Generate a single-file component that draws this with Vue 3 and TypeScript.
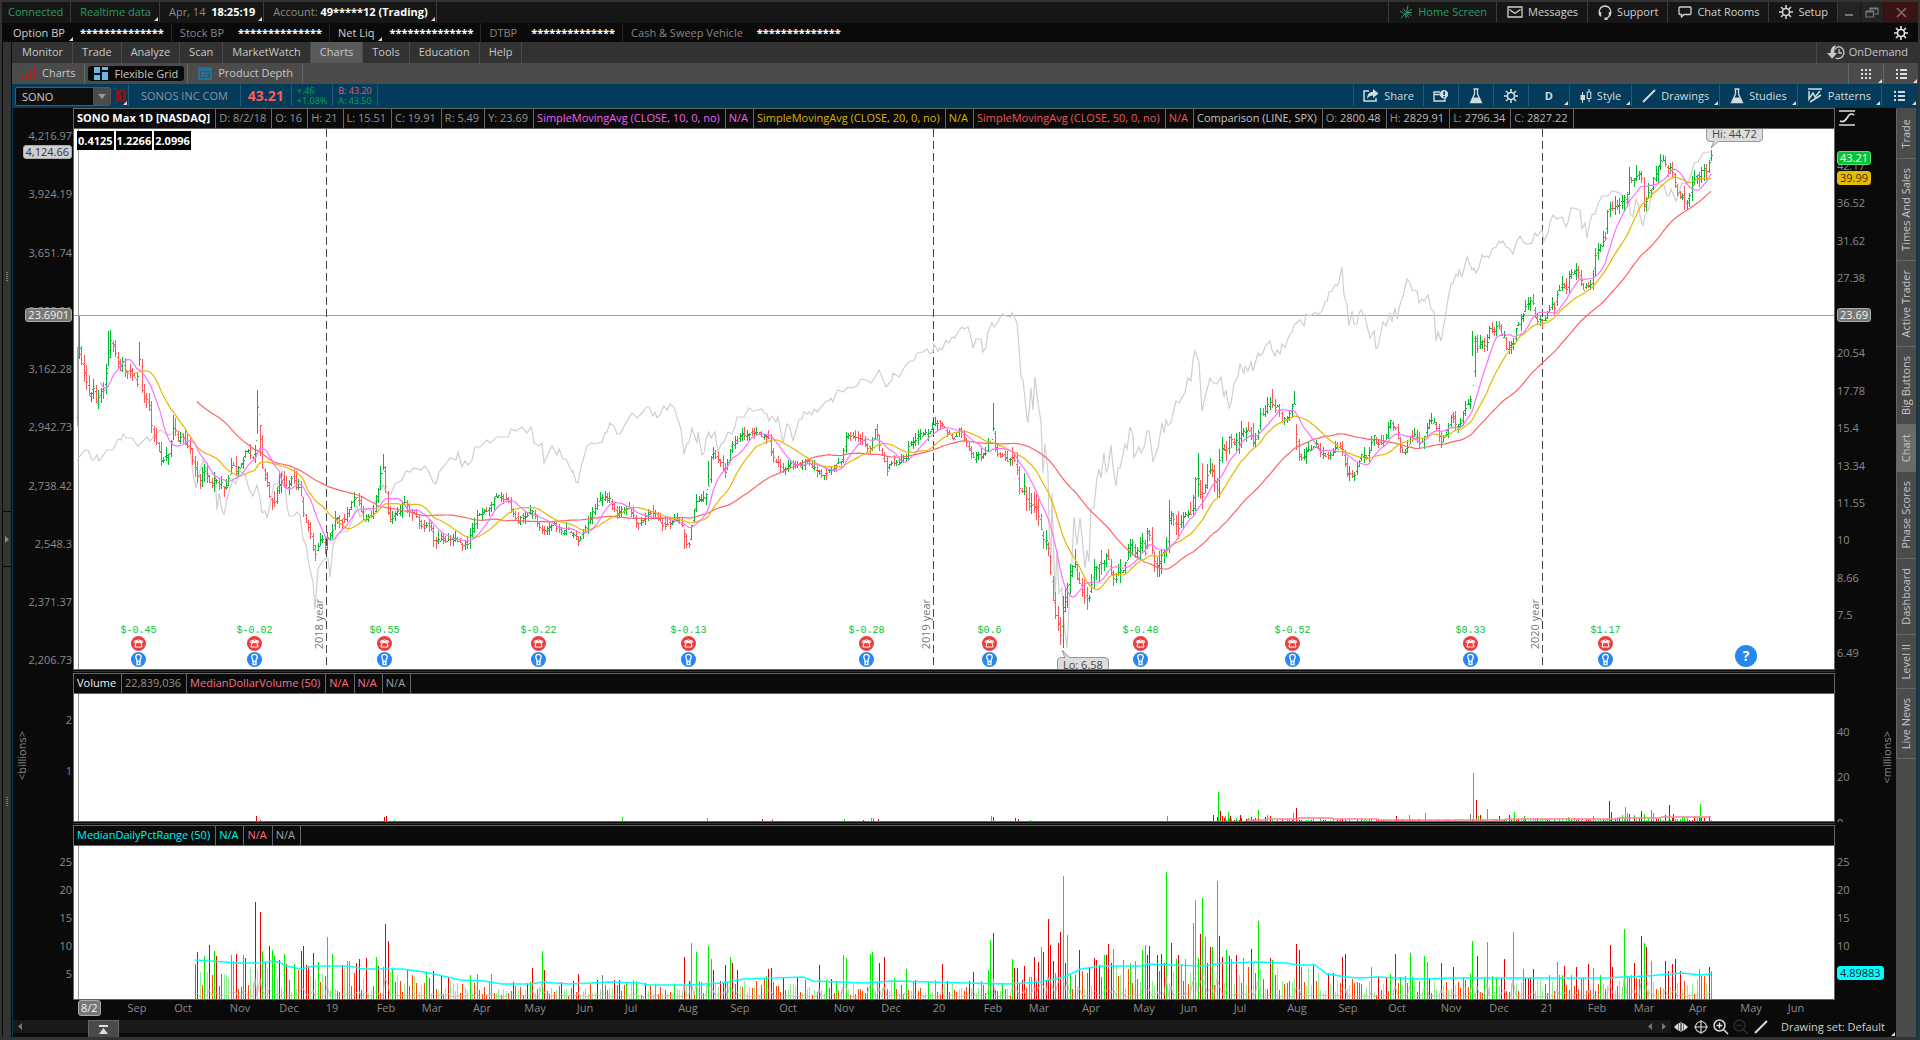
<script setup lang="ts">
import { h } from 'vue'

type Pt = [number, number]
interface IconDef { w: number; h: number; line?: string; fill?: string; sw?: number }

const icons: Record<string, IconDef> = {
  home: { w: 14, h: 14, line: 'M2 13L7.500 7.500L9 .5M7.500 7.500L13 4M7.500 7.500H13M7.500 7.500L12.500 10.500M7 8L9.500 12.500M6.500 8.500L7 13M1 6L5.500 8.500M4 3.500L7 7', sw: 1 },
  mail: { w: 16, h: 12, line: 'M1 1H15V11H1ZM2.500 3.500L8 7.500L13.500 3.500', sw: 1.3 },
  support: { w: 14, h: 15, line: 'M3 11Q.8 9.500 1.200 6.500Q2.200 1.200 7 1Q11.800 1.200 12.800 6.500Q13 10 10.500 12L8.500 13.500', fill: 'M1 7H3.200V11.500H2.500L1 9.500ZM10.800 7H13V9.500L11.500 11.500H10.800ZM6.500 12.500H9.500V15H6.500Z', sw: 1.3 },
  chat: { w: 14, h: 12, line: 'M2 1H12Q13 1 13 2V7.500Q13 8.500 12 8.500H6L3.500 11V8.500H2Q1 8.500 1 7.500V2Q1 1 2 1Z', sw: 1.3 },
  gear: { w: 14, h: 14, line: 'M7 3.500A3.500 3.500 0 1 0 7 10.500A3.500 3.500 0 1 0 7 3.500M7 0V3M7 11V14M0 7H3M11 7H14M2 2L4.300 4.300M9.700 9.700L12 12M2 12L4.300 9.700M9.700 4.300L12 2', sw: 1.6 },
  restore: { w: 14, h: 11, line: 'M1 4H8.500V10H1ZM5 4V1H13V7H8.500M5 2H13M1 5H8.500', sw: 1.2 },
  close: { w: 11, h: 11, line: 'M1 1L10 10M10 1L1 10', sw: 1.6 },
  min: { w: 9, h: 9, fill: 'M0 6H8V8H0Z' },
  ondemand: { w: 18, h: 15, line: 'M11 1.500A6 6 0 1 1 8.500 13M12 4V8H15M8 4.500Q9 2 12 1.500', fill: 'M9 .3Q3.500 1 3.500 8H0L5.200 13.800L10 8H7.500Q7 3 9 .3Z', sw: 1.3 },
  dots: { w: 10, h: 10, fill: 'M0 0h2v2h-2zM4 0h2v2h-2zM8 0h2v2h-2zM0 4h2v2h-2zM4 4h2v2h-2zM8 4h2v2h-2zM0 8h2v2h-2zM4 8h2v2h-2zM8 8h2v2h-2z' },
  list: { w: 11, h: 10, fill: 'M0 0h2v2h-2zM4 0h7v2h-7zM0 4h2v2h-2zM4 4h7v2h-7zM0 8h2v2h-2zM4 8h7v2h-7z' },
  charts: { w: 14, h: 13, fill: 'M0 9h2v4h-2zM4 6h2v7h-2zM8 3h2v10h-2zM11 0h2v13h-2z' },
  flex: { w: 14, h: 13, fill: 'M0 0H6V6H0ZM8 0H14V3H8ZM0 8H6V13H0ZM8 5H14V13H8Z' },
  depth: { w: 14, h: 13, line: 'M1 1H13V12H1ZM1 3H13M3 7L5 5L8 7L11 5M3 10L5 8L8 10L11 8', sw: 1.4 },
  share: { w: 16, h: 13, line: 'M6 2H1V12H13V9', fill: 'M10 0L15.500 4.500L10 9V6.500Q6 6.500 4 10Q4 3 10 2.700Z', sw: 1.5 },
  news: { w: 15, h: 12, line: 'M7 2H1V11H12V8M1 4.500H7', fill: 'M11 0A4 4 0 1 0 11 8.400A4 4 0 1 0 11 0ZM10.400 1.500H12V5H10.400ZM10.400 6H12V7.300H10.400Z', sw: 1.4 },
  flask: { w: 14, h: 16, line: 'M4.500 1H9.500M5.500 1V6L1.500 14.500H12.500L8.500 6V1', fill: 'M4 9.500H10L12.500 15H1.500Z', sw: 1.3 },
  style: { w: 12, h: 14, line: 'M2.500 3V14M9 0V3M9 9.500V13M7.200 3H10.800V9.500H7.200Z', fill: 'M.5 6H5V11H.5Z', sw: 1.1 },
  pen: { w: 14, h: 14, line: 'M1 13L13 1', sw: 2 },
  patterns: { w: 15, h: 15, line: 'M0 1H14M1 3V11L5 5L7 9L12 3M2 14L13 7', sw: 1.5 },
  curve: { w: 16, h: 16, line: 'M0 1H16M0 15H16M1 11Q5 13 8 8Q11 2 15 5', sw: 1.7 },
  pan: { w: 14, h: 10, line: 'M5.500 1V9M8.500 1V9M7 0V10', fill: 'M0 5L4.500 1V9ZM14 5L9.500 1V9Z', sw: 1 },
  cross: { w: 14, h: 14, line: 'M7 1.500A5.500 5.500 0 1 0 7 12.500A5.500 5.500 0 1 0 7 1.500M7 0V14M0 7H14', sw: 1.1 },
  zoomin: { w: 16, h: 16, line: 'M6.500 1A5.500 5.500 0 1 0 6.500 12A5.500 5.500 0 1 0 6.500 1M10.500 10.500L15 15M3.500 6.500H9.500M6.500 3.500V9.500', sw: 1.5 },
  zoomout: { w: 16, h: 16, line: 'M6.500 1A5.500 5.500 0 1 0 6.500 12A5.500 5.500 0 1 0 6.500 1M10.500 10.500L15 15M3.500 6.500H9.500', sw: 1.5 },
  up: { w: 9, h: 9, fill: 'M0 0H9V2H0ZM4.500 3L9 9H0Z' },
  down: { w: 8, h: 5, fill: 'M0 0H8L4 5Z' },
  left: { w: 4, h: 7, fill: 'M4 0V7L0 3.500Z' },
  right: { w: 4, h: 7, fill: 'M0 0V7L4 3.500Z' },
}

const Icon = (p: { name: string }) => {
  const d = icons[p.name]
  return h('svg', { width: d.w, height: d.h, viewBox: `0 0 ${d.w} ${d.h}`, 'aria-hidden': 'true', style: { display: 'block', flex: 'none' } }, [
    d.fill ? h('path', { d: d.fill, fill: 'currentColor', 'fill-rule': 'evenodd' }) : null,
    d.line ? h('path', { d: d.line, fill: 'none', stroke: 'currentColor', 'stroke-width': d.sw }) : null,
  ])
}
Icon.props = ['name']

const balances = [
  { label: 'Option BP', menu: true }, { label: 'Stock BP', menu: false }, { label: 'Net Liq', menu: true },
  { label: 'DTBP', menu: false }, { label: 'Cash & Sweep Vehicle', menu: false },
]
const hidden = '**************'
const menu = ['Monitor', 'Trade', 'Analyze', 'Scan', 'MarketWatch', 'Charts', 'Tools', 'Education', 'Help']
const topLinks = [
  { icon: 'home', text: 'Home Screen' }, { icon: 'mail', text: 'Messages' }, { icon: 'support', text: 'Support' },
  { icon: 'chat', text: 'Chat Rooms' }, { icon: 'gear', text: 'Setup' },
]
const sideTabs = ['Trade', 'Times And Sales', 'Active Trader', 'Big Buttons', 'Chart', 'Phase Scores', 'Dashboard', 'Level II', 'Live News']

const priceLegend = [
  { t: 'SONO Max 1D [NASDAQ]', c: 'bold' }, { t: 'D: 8/2/18', c: '' }, { t: 'O: 16', c: '' }, { t: 'H: 21', c: '' },
  { t: 'L: 15.51', c: '' }, { t: 'C: 19.91', c: '' }, { t: 'R: 5.49', c: '' }, { t: 'Y: 23.69', c: '' },
  { t: 'SimpleMovingAvg (CLOSE, 10, 0, no)', c: 'magenta' }, { t: 'N/A', c: 'magenta' },
  { t: 'SimpleMovingAvg (CLOSE, 20, 0, no)', c: 'gold' }, { t: 'N/A', c: 'gold' },
  { t: 'SimpleMovingAvg (CLOSE, 50, 0, no)', c: 'red' }, { t: 'N/A', c: 'red' },
  { t: 'Comparison (LINE, SPX)', c: 'pale' },
]
const spxLegend = [['O:', '2800.48'], ['H:', '2829.91'], ['L:', '2796.34'], ['C:', '2827.22']]
const volLegend = [
  { t: 'Volume', c: 'white' }, { t: '22,839,036', c: '' }, { t: 'MedianDollarVolume (50)', c: 'pink' },
  { t: 'N/A', c: 'pink' }, { t: 'N/A', c: 'pink' }, { t: 'N/A', c: 'mid' },
]
const rangeLegend = [
  { t: 'MedianDailyPctRange (50)', c: 'cyan' }, { t: 'N/A', c: 'cyan' }, { t: 'N/A', c: 'pink' }, { t: 'N/A', c: 'mid' },
]

const spxTicks: [string, number][] = [
  ['4,216.97', 136], ['3,924.19', 194], ['3,651.74', 253], ['3,398.21', 311], ['3,162.28', 369], ['2,942.73', 427],
  ['2,738.42', 486], ['2,548.3', 544], ['2,371.37', 602], ['2,206.73', 660],
]
const priceTicks: [string, number][] = [
  ['42.17', 166], ['36.52', 203], ['31.62', 241], ['27.38', 278], ['20.54', 353], ['17.78', 391], ['15.4', 428],
  ['13.34', 466], ['11.55', 503], ['10', 540], ['8.66', 578], ['7.5', 615], ['6.49', 653],
]
const rangeTicks: [string, number][] = [['25', 862], ['20', 890], ['15', 918], ['10', 946]]
const months: [string, number][] = [
  ['Sep', 137], ['Oct', 183], ['Nov', 240], ['Dec', 289], ['19', 332], ['Feb', 386], ['Mar', 432], ['Apr', 482], ['May', 535],
  ['Jun', 585], ['Jul', 631], ['Aug', 688], ['Sep', 740], ['Oct', 788], ['Nov', 844], ['Dec', 891], ['20', 939], ['Feb', 993],
  ['Mar', 1039], ['Apr', 1091], ['May', 1144], ['Jun', 1189], ['Jul', 1240], ['Aug', 1297], ['Sep', 1348], ['Oct', 1397],
  ['Nov', 1451], ['Dec', 1499], ['21', 1547], ['Feb', 1597], ['Mar', 1644], ['Apr', 1698], ['May', 1751], ['Jun', 1796],
]
const earnings: [string, number][] = [
  ['$-0.45', 138], ['$-0.02', 254], ['$0.55', 384], ['$-0.22', 538], ['$-0.13', 688], ['$-0.28', 866], ['$0.6', 989],
  ['$-0.48', 1140], ['$-0.52', 1292], ['$0.33', 1470], ['$1.17', 1605],
]
const years: [string, number][] = [['2018 year', 326], ['2019 year', 933], ['2020 year', 1542]]

const px = (x: number) => ((x - 74) / 1760) * 100 + '%'
const p1 = (y: number) => ((y - 108) / 562) * 100 + '%'
const p2 = (y: number) => ((y - 673) / 149) * 100 + '%'
const p3 = (y: number) => ((y - 825) / 175) * 100 + '%'

const parse = (s: string): Pt[] => s.trim().split(/\s+/).map(t => t.split(',').map(Number) as Pt)
const at = (pts: Pt[], x: number): number => {
  if (x <= pts[0][0]) return pts[0][1]
  for (let i = 1; i < pts.length; i++) {
    if (x <= pts[i][0]) {
      const [x0, y0] = pts[i - 1]
      const [x1, y1] = pts[i]
      return x1 === x0 ? y1 : y0 + ((y1 - y0) * (x - x0)) / (x1 - x0)
    }
  }
  return pts[pts.length - 1][1]
}
let seed = 20210414
const rnd = () => {
  seed = (seed * 1664525 + 1013904223) % 4294967296
  return seed / 4294967296
}

const closes = parse(`79,347 82,365 87,384 90,406 92,380 96,404 99,393 103,389 107,365 109,347 111,338 114,347 117,358 120,369
121,354 125,371 130,371 133,374 137,384 139,365 140,344 142,398 145,395 149,406 152,430 156,443 158,447 162,465 165,452 167,458
170,445 172,439 174,419 177,441 180,439 183,437 186,445 190,447 193,465 197,474 200,480 203,467 207,476 211,487 215,474 218,485
222,482 225,491 228,480 232,461 236,474 239,465 243,461 246,447 249,454 252,460 256,450 257,402 260,428 261,454 263,474 266,474
269,495 273,506 276,493 279,484 282,480 286,489 289,482 292,476 296,485 299,489 302,502 304,521 307,521 311,534 313,546 315,556
318,543 322,535 324,546 326,550 328,530 331,541 333,521 337,517 340,521 343,524 346,513 349,508 352,502 356,497 359,502 362,517
366,519 369,515 372,517 376,498 378,489 381,469 383,467 385,484 388,517 391,521 394,513 398,511 402,508 405,502 409,511 413,513
417,517 420,522 423,528 427,524 431,528 434,545 437,539 442,537 446,541 450,539 454,537 458,541 463,545 467,543 470,535 473,528
477,513 482,511 487,510 490,507 493,498 497,495 502,497 507,498 510,507 513,513 517,522 522,515 526,518 530,510 534,510 537,522
542,530 546,530 550,525 554,525 558,528 563,532 568,528 572,535 576,537 579,542 582,532 585,528 588,522 592,513 596,508 600,498
604,498 609,498 612,505 617,513 621,510 625,507 629,508 633,515 637,523 642,522 646,515 650,513 653,510 657,517 662,525 667,525
672,523 677,518 681,525 684,532 687,547 689,543 692,520 695,503 697,498 701,500 704,498 708,490 709,470 710,457 712,453 717,460
721,463 725,473 728,460 731,445 735,443 740,437 745,433 750,433 755,433 760,435 765,437 769,440 772,455 775,462 779,462 783,470
786,468 790,463 795,464 800,465 805,462 810,463 815,467 820,473 823,477 828,470 832,470 837,463 842,460 844,445 846,434 851,435
857,436 862,440 867,447 869,452 872,440 875,428 878,440 881,453 884,460 886,472 889,465 893,463 897,462 902,460 906,457 909,443
914,440 918,435 923,434 928,433 932,430 934,422 939,423 943,425 946,433 949,432 952,437 956,440 958,429 960,428 963,435 968,447
973,458 977,453 982,455 985,453 988,442 991,442 992,423 995,447 998,455 1003,455 1008,462 1012,457 1015,460 1017,473 1020,492
1024,487 1027,502 1030,503 1033,507 1037,508 1040,527 1043,540 1047,538 1050,565 1052,590 1054,612 1057,617 1059,632 1061,640
1063,600 1066,600 1068,580 1071,570 1074,562 1077,577 1081,587 1085,598 1089,598 1092,580 1094,568 1098,565 1103,563 1107,553
1110,567 1112,580 1116,577 1119,570 1123,570 1127,557 1129,545 1132,542 1135,552 1139,547 1142,542 1145,553 1147,532 1149,533
1152,553 1155,565 1158,565 1162,552 1166,550 1168,540 1169,510 1173,517 1178,527 1182,517 1186,513 1190,515 1193,508 1195,480
1198,477 1200,493 1203,495 1206,480 1210,467 1212,470 1214,477 1217,490 1219,460 1222,447 1226,453 1229,437 1233,442 1237,438
1242,433 1246,430 1250,433 1253,443 1257,438 1260,413 1264,413 1268,403 1272,403 1275,410 1278,405 1282,422 1286,417 1290,413
1293,395 1296,427 1297,447 1300,457 1304,457 1307,450 1312,447 1316,443 1320,452 1324,455 1328,457 1333,450 1337,448 1342,447
1344,460 1347,475 1351,472 1354,475 1358,463 1362,453 1366,457 1370,448 1373,435 1377,445 1382,443 1386,437 1389,420 1393,425
1397,428 1399,443 1403,455 1407,448 1410,437 1415,435 1419,442 1423,440 1427,427 1430,417 1433,420 1437,429 1441,442 1445,435
1449,424 1452,413 1456,427 1460,424 1463,411 1467,404 1472,399 1473,356 1475,335 1477,347 1481,340 1485,344 1488,342 1489,327
1493,335 1497,325 1499,327 1502,338 1504,335 1506,349 1510,345 1514,342 1516,327 1519,322 1523,313 1526,305 1529,300 1533,305
1536,322 1540,318 1544,322 1547,313 1551,305 1555,309 1557,291 1562,285 1566,289 1569,276 1573,271 1577,269 1580,276 1583,289
1587,282 1589,289 1593,276 1594,256 1598,249 1602,242 1606,236 1608,198 1610,209 1613,207 1617,207 1622,202 1624,198 1627,202
1629,178 1633,180 1638,173 1641,178 1643,202 1645,207 1647,193 1651,193 1653,178 1657,171 1660,160 1664,162 1668,167 1672,169
1674,180 1678,196 1682,195 1686,204 1689,195 1692,185 1696,175 1699,178 1702,167 1706,171 1709,162 1711,156`)

const spx = parse(`77,460 85,450 88,450 92,460 94,460 97,455 99,461 107,450 113,450 118,439 121,440 123,434 126,438 132,438 138,446
142,442 147,437 150,441 156,434 161,430 167,435 172,434 178,431 182,433 187,443 190,448 193,474 196,488 199,474 203,460 208,474
215,474 217,510 219,493 222,510 224,514 228,495 233,480 236,484 239,471 245,474 249,489 253,496 257,485 260,498 262,513 265,511
267,518 271,500 274,484 278,484 282,471 285,485 287,506 289,516 294,516 297,512 300,515 303,539 306,545 309,565 313,582 315,609
318,569 322,562 325,559 328,558 330,577 333,546 337,535 342,532 347,532 352,521 357,506 360,517 364,513 367,509 371,511 377,498
383,485 387,493 391,494 395,484 402,480 406,471 410,472 414,468 421,470 425,466 429,472 433,482 436,484 439,472 445,465 450,458
456,460 458,452 462,467 465,461 468,465 472,460 475,447 480,447 487,440 490,443 497,437 508,437 511,429 516,431 522,427 527,433
531,427 532,429 534,443 539,446 542,443 544,463 552,446 557,455 559,449 563,459 566,459 572,472 573,471 576,482 578,483 581,467
587,446 591,443 595,444 602,442 605,433 607,432 610,423 614,426 617,434 620,434 627,421 632,413 637,418 642,413 646,407 649,407
653,416 655,412 657,418 660,415 664,406 667,410 670,404 674,407 677,417 681,429 684,454 687,443 689,443 692,428 697,443 698,432
702,455 704,453 706,440 709,432 711,438 715,432 718,453 721,444 724,442 728,432 732,434 735,427 737,417 744,417 749,408 753,411
762,409 764,413 767,414 769,421 772,416 776,422 778,417 781,432 783,443 787,424 790,428 793,441 799,420 802,419 804,412 807,414
809,412 812,415 814,409 817,412 826,401 829,401 831,398 833,402 836,393 838,390 843,392 848,387 851,388 857,386 861,379 866,380
871,383 875,377 879,370 883,379 886,387 892,380 893,373 899,377 905,366 910,361 914,361 917,353 923,352 927,349 930,354 933,352
934,344 938,351 940,348 942,350 946,340 949,343 952,337 955,338 959,330 962,327 964,329 968,327 971,337 973,348 976,339 981,339
983,352 986,347 988,332 992,323 994,327 998,322 1002,314 1006,316 1011,317 1012,313 1014,316 1017,323 1019,347 1021,377 1023,380
1027,418 1028,423 1031,388 1033,410 1035,377 1038,403 1041,422 1043,473 1045,444 1048,473 1049,523 1051,565 1052,493 1055,597
1057,550 1059,593 1062,588 1064,623 1067,648 1070,587 1072,560 1074,517 1077,545 1080,518 1083,547 1085,568 1087,550 1089,562
1091,508 1094,508 1097,477 1099,470 1101,478 1104,453 1106,472 1108,468 1111,445 1113,467 1116,486 1118,468 1120,468 1123,455
1125,444 1127,449 1130,427 1133,435 1134,458 1139,447 1141,453 1144,447 1147,431 1149,431 1152,453 1153,462 1156,453 1158,448
1162,423 1164,433 1166,420 1168,425 1171,423 1173,413 1176,401 1179,403 1185,392 1188,378 1191,381 1193,360 1195,351 1199,362
1202,411 1205,397 1210,378 1212,382 1217,384 1221,377 1224,397 1226,390 1229,408 1231,403 1234,384 1238,376 1240,364 1244,373
1245,366 1248,371 1251,362 1253,371 1258,353 1260,356 1263,353 1265,347 1270,341 1272,350 1275,356 1277,350 1280,354 1282,344
1285,347 1289,336 1292,332 1294,325 1300,320 1304,326 1306,314 1310,316 1316,312 1318,315 1322,311 1325,302 1327,301 1329,292
1332,291 1335,285 1337,286 1339,281 1342,267 1344,295 1347,305 1349,326 1352,311 1354,324 1357,324 1359,313 1361,310 1365,317
1370,338 1374,331 1376,349 1378,347 1383,322 1386,326 1390,314 1392,322 1395,308 1397,319 1400,305 1404,292 1407,279 1410,283
1412,290 1417,291 1419,303 1422,299 1424,301 1428,295 1431,309 1434,312 1436,341 1438,332 1441,341 1445,318 1448,299 1451,284
1453,283 1456,274 1458,276 1459,270 1462,277 1467,257 1469,262 1472,270 1474,268 1476,273 1479,267 1482,255 1484,257 1487,256
1489,258 1492,249 1496,247 1499,241 1501,243 1503,241 1506,247 1509,248 1513,254 1516,243 1520,236 1523,242 1527,244 1532,243
1535,233 1537,236 1542,230 1544,241 1548,233 1550,222 1553,215 1557,219 1562,217 1566,227 1568,222 1571,208 1574,208 1580,210
1582,229 1585,223 1587,238 1590,222 1592,215 1595,214 1598,204 1602,196 1608,196 1612,191 1617,192 1620,194 1624,198 1627,204
1629,196 1630,213 1633,217 1636,199 1639,207 1640,216 1643,226 1645,215 1648,211 1651,198 1653,189 1658,185 1664,185 1667,196
1669,196 1671,189 1676,201 1680,189 1682,183 1687,184 1689,180 1692,171 1694,163 1698,162 1703,153 1706,153 1708,152 1711,152`)
const spxLine = spx.map(p => p.join(',')).join(' ')

const extremes: Record<string, [number, number]> = {
  '79': [316, 359], '109': [331, 366], '140': [342, 366], '174': [415, 440], '257': [390, 434], '260': [425, 456], '315': [545, 561],
  '383': [454, 470], '992': [403, 431], '1012': [447, 466], '1063': [596, 648], '1052': [576, 601], '1074': [549, 568],
  '1169': [500, 553], '1195': [477, 511], '1198': [453, 497], '1203': [463, 509], '1293': [391, 404], '1296': [424, 450],
  '1473': [331, 356], '1272': [389, 408], '1711': [150, 161], '1219': [449, 498], '684': [529, 549], '708': [461, 486],
}
const step = 1632 / 677
const xs = Array.from({ length: 678 }, (_, i) => 79 + i * step)
const spread = (x: number) =>
  x < 300 ? 10 : x < 480 ? 8 : x < 1015 ? 7 : x < 1100 ? 14 : x < 1260 ? 13 : x < 1600 ? 8 : 11

const closeY = xs.map(x => at(closes, x) + (rnd() - 0.5) * 3)
const price = closeY.map(y => 10 * Math.exp((540 - y) / 260.2))
let upBars = ''
let downBars = ''
const taken = new Set<string>()
xs.forEach((x, i) => {
  const c = closeY[i]
  const o = i ? closeY[i - 1] * 0.7 + c * 0.3 + (rnd() - 0.5) * 5 : c + 8
  let hi = Math.min(o, c) - rnd() * spread(x)
  let lo = Math.max(o, c) + rnd() * spread(x)
  for (const k in extremes) {
    if (!taken.has(k) && Math.abs(Number(k) - x) <= step / 2 + 0.1) {
      taken.add(k)
      hi = extremes[k][0]
      lo = extremes[k][1]
    }
  }
  const X = Math.round(x)
  const d = `M${X} ${Math.round(hi)}h1V${Math.round(lo)}h-1zM${X - 1} ${Math.round(o)}h1v1h-1zM${X + 1} ${Math.round(c)}h1v1h-1z`
  if (c <= o) upBars += d
  else downBars += d
})
const sma = (n: number) => {
  let s = ''
  for (let i = n - 1; i < xs.length; i++) {
    let t = 0
    for (let k = 0; k < n; k++) t += price[i - k]
    s += `${xs[i].toFixed(1)},${(540 - 260.2 * Math.log(t / n / 10)).toFixed(1)} `
  }
  return s
}
const sma10 = sma(10)
const sma20 = sma(20)
const sma50 = sma(50)

const median = parse(`195,960 209,961 225,962 235,963 261,963 272,961 279,962 286,966 301,969 313,966 349,966 363,969 402,969 424,972
434,974 461,980 484,981 502,984 531,984 543,982 555,983 569,984 592,983 608,982 640,983 648,985 689,985 722,983 744,979 803,977
813,981 864,983 893,981 967,983 1007,984 1040,982 1064,977 1081,969 1101,966 1142,966 1148,964 1171,965 1203,966 1224,963
1260,962 1286,963 1298,965 1315,965 1327,974 1347,977 1360,978 1378,977 1419,979 1451,978 1607,978 1623,977 1647,976 1682,973
1700,975 1711,974`)
const medianLine = median.map(p => p.join(',')).join(' ')

const parseBars = (s: string) => s.trim().split(/\s+/).map(t => {
  const [c, x, y] = t.split(',')
  return { c, x: Number(x), y: Number(y) }
})
const rangePeaks = parseBars(`r,196,952 r,209,945 g,213,951 g,230,955 r,236,954 g,244,955 r,256,902 r,260,912 g,262,951 r,269,946
g,273,950 g,285,954 r,300,951 r,302,946 r,312,953 g,327,937 g,333,954 g,346,961 r,358,959 r,367,958 g,375,957 r,384,924 r,387,941
r,433,971 g,469,975 g,476,974 g,491,974 r,533,968 g,541,951 r,544,970 r,578,974 n,601,975 r,683,957 g,692,943 g,696,952 g,707,946
g,709,959 r,712,970 r,726,965 g,729,957 r,731,963 r,738,970 r,769,969 r,772,968 r,818,965 g,842,955 g,844,958 g,869,954 g,871,952
r,879,963 r,883,957 g,907,969 r,943,964 r,973,972 g,987,970 g,991,940 r,993,933 g,1011,959 r,1014,968 r,1016,968 r,1025,966
r,1033,957 r,1038,962 g,1042,947 r,1044,952 r,1049,919 r,1051,945 r,1054,961 r,1057,943 r,1059,932 g,1061,876 r,1063,963
g,1067,935 r,1079,950 r,1093,958 g,1104,955 r,1107,955 r,1109,944 g,1112,949 g,1124,960 g,1143,950 g,1145,945 r,1149,946
g,1167,872 r,1172,943 g,1175,959 r,1178,955 g,1193,923 g,1196,900 r,1199,934 g,1201,898 g,1205,937 r,1209,947 g,1211,947
g,1218,881 r,1220,936 r,1222,957 g,1227,950 r,1230,956 r,1251,949 g,1258,921 r,1270,958 r,1296,944 r,1298,950 r,1343,957
r,1345,954 g,1372,967 r,1396,954 g,1409,953 g,1425,956 g,1427,962 r,1440,963 r,1454,967 g,1473,941 r,1476,956 g,1487,942
r,1504,959 g,1514,932 g,1524,969 r,1533,969 g,1556,962 r,1564,966 r,1577,967 r,1587,964 g,1593,968 r,1609,945 r,1611,967
g,1625,929 r,1633,963 r,1641,936 g,1644,943 r,1647,947 g,1651,961 r,1665,961 r,1673,964 r,1676,959 g,1700,969 r,1709,967`)
const volPeaks = parseBars(`r,256,816 r,260,820 r,384,817 r,386,816 g,394,820 g,622,817 g,707,818 r,762,819 r,772,820 g,844,819 r,863,820 g,871,818 g,873,818
r,878,819 g,991,816 r,993,817 r,1015,818 r,1018,819 g,1030,820 g,1167,816 r,1213,815 g,1218,792 r,1220,811 r,1222,816 g,1225,816 g,1228,812
r,1230,816 r,1240,815 g,1258,810 g,1267,815 r,1270,816 g,1293,813 r,1296,808 r,1396,816 g,1409,815 g,1425,813 n,1470,814
g,1473,773 r,1476,800 g,1478,816 r,1480,815 g,1487,809 r,1499,816 r,1509,815 g,1514,812 g,1524,816 g,1568,817 g,1593,816 r,1609,801 r,1611,812
g,1622,815 g,1625,807 g,1627,813 r,1629,814 g,1634,815 r,1641,811 g,1644,814 g,1651,810 g,1653,813 r,1665,815 r,1669,805 r,1673,814
g,1694,816 g,1700,804 r,1709,816`)

// Each peak belongs to one trading day; neighbours that round to the same day move on to the next.
const peakByDay = new Map<number, { c: string; y: number }>()
rangePeaks.forEach(p => {
  let i = Math.round((p.x - 79) / step)
  while (peakByDay.has(i)) i++
  peakByDay.set(i, p)
})
const rangeBars: Record<string, string> = { g: '', r: '', p: '', o: '', n: '' }
let ghost = ''
for (let i = 48; i < xs.length; i++) {
  const X = Math.round(xs[i])
  const m = 999 - at(median, xs[i])
  const busy = (X > 1010 && X < 1240) || (X > 680 && X < 735) ? 1.15 : 1
  let height = m * (0.2 + 0.98 * rnd()) * busy
  const up = rnd() > 0.5
  let key = height > m ? (up ? 'g' : 'r') : up ? 'p' : 'o'
  const peak = peakByDay.get(i)
  if (peak) {
    height = 999 - peak.y
    key = peak.c
  }
  rangeBars[key] += `M${X} ${Math.round(999 - height)}h1V999h-1z`
  const over = Math.max(0, height - m * 0.9)
  ghost += `${X},${Math.round(997 - Math.min(over * 0.35, 18) - rnd() * 2)} `
}
const volBars: Record<string, string> = { g: '', r: '', n: '' }
volPeaks.forEach(p => { volBars[p.c] += `M${p.x} ${p.y}h1V821h-1z` })
xs.forEach(x => {
  if (x < 1215) return
  const X = Math.round(x)
  const big = x > 1600 || x < 1270 ? 4 : 2
  volBars[rnd() > 0.5 ? 'g' : 'r'] += `M${X} ${821 - Math.round(rnd() * big)}h1V821h-1z`
})
const volMedian = '1247,820 1266,820 1267,819 1298,819 1299,818 1332,818 1333,819 1378,819 1379,820 1504,820 1506,819 1616,819 1618,818 1660,818 1662,817 1711,817'
</script>

<template>
  <div class="app">
    <header class="titlebar">
      <div class="cell ok">Connected</div>
      <button class="cell ok tri">Realtime data</button>
      <button class="cell dim tri">Apr, 14&nbsp; <b>18:25:19</b></button>
      <button class="cell dim tri">Account: <b>49*****12 (Trading)</b></button>
      <nav class="toplinks">
        <button v-for="l in topLinks" :key="l.text" :class="['cell', 'link', { ok: l.icon === 'home' }]">
          <Icon :name="l.icon" /><span>{{ l.text }}</span>
        </button>
        <button class="win" aria-label="Minimize"><Icon name="min" /></button>
        <button class="win" aria-label="Restore"><Icon name="restore" /></button>
        <button class="win shut" aria-label="Close"><Icon name="close" /></button>
      </nav>
    </header>

    <section class="balances">
      <div v-for="b in balances" :key="b.label" :class="['bal', { active: b.menu }]">
        <span :class="['ballabel', { tri: b.menu }]">{{ b.label }}</span><b>{{ hidden }}</b>
      </div>
      <button class="gearbtn" aria-label="Settings"><Icon name="gear" /></button>
    </section>

    <div class="body">
      <aside class="strip">
        <span class="grip"></span>
        <button class="expand" aria-label="Expand"><Icon name="right" /></button>
        <span class="grip"></span>
      </aside>
      <div class="main">
        <nav class="menubar">
          <button v-for="m in menu" :key="m" :class="{ sel: m === 'Charts' }">{{ m }}</button>
          <button class="ondemand"><Icon name="ondemand" />OnDemand</button>
        </nav>
        <nav class="subtabs">
          <button class="sub"><i class="red-ic"><Icon name="charts" /></i>Charts</button>
          <div class="pillbox"><button class="pill"><i class="sky"><Icon name="flex" /></i>Flexible Grid</button></div>
          <button class="sub"><i class="azure"><Icon name="depth" /></i>Product Depth</button>
          <button class="sq tri first" aria-label="Grid"><Icon name="dots" /></button>
          <button class="sq tri" aria-label="Menu"><Icon name="list" /></button>
        </nav>
        <section class="toolbar">
          <div class="combo">
            <input value="SONO" aria-label="Symbol" />
            <button aria-label="Choose symbol"><Icon name="down" /></button>
          </div>
          <button class="linkno tri"><span>1</span></button>
          <div class="info name">SONOS INC COM</div>
          <div class="info last">43.21</div>
          <div class="info two up"><span>+.46</span><span>+1.08%</span></div>
          <div class="info two"><span class="bid">B: 43.20</span><span class="up">A: 43.50</span></div>
          <div class="tools">
            <button class="wide"><Icon name="share" />Share</button>
            <button class="square" aria-label="News"><Icon name="news" /></button>
            <button class="square" aria-label="Edit studies"><Icon name="flask" /></button>
            <button class="square" aria-label="Chart settings"><Icon name="gear" /></button>
            <button class="frame tri"><b>D</b></button>
            <button class="wide tri"><Icon name="style" />Style</button>
            <button class="wide tri"><Icon name="pen" />Drawings</button>
            <button class="wide tri"><Icon name="flask" />Studies</button>
            <button class="wide tri"><Icon name="patterns" />Patterns</button>
            <button class="square tri" aria-label="More"><Icon name="list" /></button>
          </div>
        </section>

        <div class="content">
          <main class="charts">
            <section class="panel price">
              <div class="axis left">
                <span v-for="t in spxTicks" :key="t[0]" class="tick" :style="{ top: p1(t[1]) }">{{ t[0] }}</span>
                <span class="tick badge light" :style="{ top: p1(152) }">4,124.66</span>
                <span class="tick badge grey" :style="{ top: p1(315) }">23.6901</span>
              </div>
              <div class="center">
                <div class="legend">
                  <span v-for="(l, i) in priceLegend" :key="i" :class="l.c">{{ l.t }}</span>
                  <span v-for="l in spxLegend" :key="l[0]">{{ l[0] }} <em>{{ l[1] }}</em></span>
                </div>
                <div class="plot">
                  <svg viewBox="74 129 1760 540" preserveAspectRatio="none" class="canvas">
                    <path d="M78.500 129V669" stroke="#999" />
                    <path d="M74 315.500H1834" stroke="#a3a3a3" />
                    <path v-for="y in years" :key="y[0]" :d="`M${y[1] + 0.5} 129V669`" stroke="#444" stroke-dasharray="8 4" shape-rendering="crispEdges" />
                    <path d="M77 347h1V426h-1zM76 417h1v1h-1z" fill="#aaa" />
                    <polyline :points="spxLine" fill="none" stroke="#cfcfcf" stroke-width="1.2" />
                    <path :d="downBars" fill="#f95b5b" shape-rendering="crispEdges" />
                    <path :d="upBars" fill="#06b932" shape-rendering="crispEdges" />
                    <polyline :points="sma50" fill="none" stroke="#ff6464" stroke-width="1.2" />
                    <polyline :points="sma20" fill="none" stroke="#e6b800" stroke-width="1.2" />
                    <polyline :points="sma10" fill="none" stroke="#ff70ff" stroke-width="1.2" />
                  </svg>
                  <div class="ratios"><b>0.4125</b><b>1.2266</b><b>2.0996</b></div>
                  <span v-for="y in years" :key="y[0]" class="year" :style="{ left: px(y[1]) }">{{ y[0] }}</span>
                  <div v-for="e in earnings" :key="e[1]" class="event" :style="{ left: px(e[1] + 0.5) }">
                    <span>{{ e[0] }}</span>
                    <svg width="15" height="31" viewBox="0 0 15 31">
                      <circle cx="7.500" cy="7.500" r="7.500" fill="#ea3f3f" />
                      <path d="M3.300 6V5.200Q7.500 2.600 11.700 5.200V6.300H9.800V5.500H5.200V6.300H3.300ZM5 6.700H10L11 11H4Z" fill="none" stroke="#fff" stroke-width="1" />
                      <circle cx="7.500" cy="23.500" r="7.500" fill="#2787ee" />
                      <path d="M6 24.500L5 22A2.700 2.700 0 1 1 10 22L9 24.500V28.500H6ZM6 25.500H9" fill="none" stroke="#fff" stroke-width="1.300" />
                    </svg>
                  </div>
                  <div class="callout hi" :style="{ left: px(1706) }">
                    Hi: 44.72
                    <svg width="12" height="8" viewBox="0 0 12 8"><path d="M7 0L4 7L12 0" fill="#ddd" stroke="#999" /></svg>
                  </div>
                  <div class="callout lo" :style="{ left: px(1057) }">
                    Lo: 6.58
                    <svg width="12" height="9" viewBox="0 0 12 9"><path d="M3 9L0 1L8 9" fill="#ddd" stroke="#999" /></svg>
                  </div>
                  <button class="help" :style="{ left: px(1746) }" aria-label="Help">?</button>
                </div>
              </div>
              <div class="axis right">
                <i class="curve"><Icon name="curve" /></i>
                <span v-for="t in priceTicks" :key="t[0]" class="tick" :style="{ top: p1(t[1]) }">{{ t[0] }}</span>
                <span class="tick badge green" :style="{ top: p1(158) }">43.21</span>
                <span class="tick badge gold-bg" :style="{ top: p1(178) }">39.99</span>
                <span class="tick badge grey" :style="{ top: p1(315) }">23.69</span>
              </div>
            </section>

            <div class="divider"></div>

            <section class="panel volume">
              <div class="axis left">
                <span class="unit">&lt;billions&gt;</span>
                <span class="tick" :style="{ top: p2(720) }">2</span>
                <span class="tick" :style="{ top: p2(771) }">1</span>
              </div>
              <div class="center">
                <div class="legend"><span v-for="(l, i) in volLegend" :key="i" :class="l.c">{{ l.t }}</span></div>
                <div class="plot">
                  <svg viewBox="74 694 1760 127" preserveAspectRatio="none" class="canvas">
                    <path d="M78.500 694V821" stroke="#999" />
                    <path :d="volBars.g" fill="#00ee00" shape-rendering="crispEdges" />
                    <path :d="volBars.r" fill="#e00000" shape-rendering="crispEdges" />
                    <path :d="volBars.n" fill="#777" shape-rendering="crispEdges" />
                    <polyline :points="volMedian" fill="none" stroke="#ff7f95" stroke-width="1.300" />
                  </svg>
                </div>
              </div>
              <div class="axis right">
                <span class="tick" :style="{ top: p2(732) }">40</span>
                <span class="tick" :style="{ top: p2(777) }">20</span>
                <span class="tick" :style="{ top: p2(823) }">0</span>
                <span class="unit">&lt;millions&gt;</span>
              </div>
            </section>

            <div class="divider"></div>

            <section class="panel range">
              <div class="axis left">
                <span v-for="t in rangeTicks" :key="t[0]" class="tick" :style="{ top: p3(t[1]) }">{{ t[0] }}</span>
                <span class="tick" :style="{ top: p3(974) }">5</span>
              </div>
              <div class="center">
                <div class="legend"><span v-for="(l, i) in rangeLegend" :key="i" :class="l.c">{{ l.t }}</span></div>
                <div class="plot">
                  <svg viewBox="74 846 1760 153" preserveAspectRatio="none" class="canvas">
                    <path d="M78.500 846V999" stroke="#999" />
                    <g shape-rendering="crispEdges">
                      <path :d="rangeBars.p" fill="#90ee90" />
                      <path :d="rangeBars.o" fill="#ff4500" />
                      <path :d="rangeBars.g" fill="#00f000" />
                      <path :d="rangeBars.r" fill="#e80000" />
                      <path :d="rangeBars.n" fill="#808080" />
                    </g>
                    <polyline :points="ghost" fill="none" stroke="#c4a8a8" stroke-opacity=".75" />
                    <polyline :points="medianLine" fill="none" stroke="#00ffff" stroke-width="1.400" />
                  </svg>
                </div>
              </div>
              <div class="axis right">
                <span v-for="t in rangeTicks" :key="t[0]" class="tick" :style="{ top: p3(t[1]) }">{{ t[0] }}</span>
                <span class="tick badge cyan-bg" :style="{ top: p3(973) }">4.89883</span>
              </div>
            </section>

            <div class="timeaxis">
              <div class="times">
                <span class="start">8/2</span>
                <span v-for="m in months" :key="m[1]" class="month" :style="{ left: px(m[1]) }">{{ m[0] }}</span>
              </div>
            </div>

            <footer class="bottom">
              <div class="scroll">
                <button class="arr" aria-label="Scroll back"><Icon name="left" /></button>
                <button class="collapse" aria-label="Collapse"><Icon name="up" /></button>
                <button class="arr push" aria-label="Scroll left"><Icon name="left" /></button>
                <button class="arr" aria-label="Scroll right"><Icon name="right" /></button>
              </div>
              <button class="bt" aria-label="Pan"><Icon name="pan" /></button>
              <button class="bt" aria-label="Crosshair"><Icon name="cross" /></button>
              <button class="bt" aria-label="Zoom in"><Icon name="zoomin" /></button>
              <button class="bt off" aria-label="Zoom out"><Icon name="zoomout" /></button>
              <button class="bt" aria-label="Draw"><Icon name="pen" /></button>
              <button class="set tri">Drawing set: Default</button>
            </footer>
          </main>

          <nav class="side">
            <button v-for="s in sideTabs" :key="s" :class="{ sel: s === 'Chart' }"><span>{{ s }}</span></button>
          </nav>
        </div>
      </div>
    </div>
  </div>
</template>

<style>
body { margin: 0; background: #0a0a0a; }
</style>

<style scoped>
* { box-sizing: border-box; }
.app {
  display: flex; flex-direction: column; height: 100vh; overflow: hidden;
  border: 2px solid #333; border-bottom-width: 3px; background: #0a0a0a; color: #c8c8c8;
  font: 11px/14px "Open Sans", "Noto Sans", sans-serif; white-space: nowrap;
}
button, input { margin: 0; padding: 0; border: 0; background: none; color: inherit; font: inherit; white-space: nowrap; border-radius: 0; }
b { font-weight: 700; color: #fff; }
i { font-style: normal; display: block; }
.tri { position: relative; }
.tri::after { content: ''; position: absolute; right: 1px; bottom: 1px; border: 2px solid transparent; border-right-color: #ddd; border-bottom-color: #ddd; }

.titlebar { display: flex; height: 21px; padding-bottom: 1px; background: #161616; }
.cell { display: flex; align-items: center; padding: 0 8px 0 9px; border-right: 1px solid #3a3a3a; }
.cell:first-child { padding: 0 7px 0 6px; }
.cell.dim { white-space: pre; color: #8c8c8c; }
.cell.ok { color: #2a9d64; }
.toplinks { display: flex; margin-left: auto; border-left: 1px solid #3a3a3a; }
.toplinks .link { gap: 5px; padding: 0 9px 0 10px; color: #d0d0d0; }
.toplinks .link.ok { color: #2a9d64; }
.win { display: flex; align-items: center; justify-content: center; width: 23px; background: #242424; color: #777; border-right: 1px solid #161616; }
.win.shut { width: 34px; background: #3d1212; color: #8a6a6a; border: 0; }

.balances { display: flex; height: 19px; padding-left: 3px; background: #0a0a0a; color: #868686; }
.bal { display: flex; align-items: center; gap: 14px; padding: 0 7px 0 8px; border-right: 1px solid #262626; }
.bal:last-of-type { border: 0; }
.bal.active { color: #d0d0d0; }
.bal.active .ballabel { padding-right: 9px; }
.bal.active { gap: 6px; }
.ballabel { height: 19px; line-height: 19px; }
.gearbtn { margin-left: auto; padding: 2px 10px; color: #e8e8e8; }

.body { display: flex; flex: 1; min-height: 0; }
.strip { display: flex; flex-direction: column; align-items: center; width: 10px; padding-bottom: 1px; background: #333; border-left: 1px solid #0a0a0a; border-right: 1px solid #0a0a0a; }
.grip { flex: 1; width: 2px; display: flex; background: repeating-linear-gradient(#777 0 1px, transparent 1px 2px) center / 2px 9px no-repeat; }
.expand { display: flex; align-items: center; justify-content: center; width: 8px; height: 56px; border: solid #0a0a0a; border-width: 1px 0; color: #888; }
.main { display: flex; flex-direction: column; flex: 1; min-width: 0; }

.menubar { display: flex; height: 21px; padding-left: 1px; background: #323232; }
.menubar button { padding: 0 9px 2px; border-right: 1px solid #4a4a4a; }
.menubar .sel { background: #5a5a5a; }
.menubar .ondemand { display: flex; align-items: center; gap: 4px; margin-left: auto; padding: 0 10px 1px; border-left: 1px solid #4a4a4a; border-right: 0; }
.subtabs { display: flex; height: 21px; background: #4b4b4b; }
.sub { display: flex; align-items: center; gap: 6px; padding: 0 9px 1px 10px; border-right: 1px solid #666; }
.pillbox { display: flex; align-items: center; padding: 0 3px; border-right: 1px solid #666; }
.pill { display: flex; align-items: center; gap: 6px; height: 15px; padding: 0 6px; border-radius: 3px; background: #0a0a0a; }
.red-ic { color: #b22222; }
.sky { color: #6bb8e8; }
.azure { color: #1a7fb0; }
.sq { display: flex; align-items: center; justify-content: center; width: 35px; border-left: 1px solid #666; color: #ddd; }
.sq.first { margin-left: auto; }

.toolbar { display: flex; height: 24px; padding: 1px 1px 2px 3px; background: #033b5a; }
.combo { display: flex; width: 96px; height: 19px; margin-top: 2px; border: 1px solid #555; border-radius: 2px; background: #0e0e0e; }
.combo input { flex: 1; min-width: 0; padding-left: 6px; color: #ccc; outline: 0; }
.combo button { display: flex; align-items: center; justify-content: center; width: 17px; background: #4b4b4b; color: #999; }
.linkno { display: flex; align-items: center; padding-left: 5px; width: 18px; border-right: 1px solid #28597a; }
.linkno span { width: 10px; height: 13px; border-radius: 2px; background: #8b1414; color: #033b5a; font-weight: 700; line-height: 13px; text-align: center; }
.info { display: flex; align-items: center; padding: 0 7px; border-right: 1px solid #28597a; }
.info.name { padding: 0 12px; color: #8b959c; }
.info.last { color: #ff5a5a; font-size: 14px; font-weight: 700; }
.info.two { flex-direction: column; align-items: flex-start; justify-content: center; padding: 0 5px; font-size: 9px; line-height: 10px; }
.up { color: #0aa53c; }
.bid { color: #e85a68; }
.tools { display: flex; margin-left: auto; border-left: 1px solid #28597a; color: #d4dade; }
.tools button { display: flex; align-items: center; justify-content: center; gap: 5px; border-right: 1px solid #28597a; }
.tools b { color: #d4dade; }
.tools .wide { padding: 0 9px; }
.tools .wide.tri { padding: 0 10px; }
.tools .square { width: 35px; }
.tools .frame { width: 41px; }
.tools button:last-child { border: 0; }

.content { display: flex; flex: 1; min-height: 0; padding-right: 2px; border-left: 1px solid #033b5a; background: #033b5a; }
.charts { display: flex; flex-direction: column; flex: 1; min-width: 0; background: #0a0a0a; }
.panel { display: flex; min-height: 0; overflow: hidden; }
.price { flex: 562 1 0; }
.volume { flex: 149 1 0; }
.range { flex: 175 1 0; }
.divider { height: 3px; margin: 0 61px 0 60px; border-top: 1px solid #0a0a0a; border-bottom: 1px solid #0a0a0a; background: #333; }
.axis { position: relative; color: #8b8b8b; }
.left { width: 60px; }
.right { width: 61px; }
.tick { position: absolute; line-height: 14px; margin-top: -7px; }
.left .tick { right: 1px; }
.right .tick { left: 2px; }
.badge { padding: 0 2px; border-radius: 3px; line-height: 12px; border: 1px solid #aaa; }
.badge.light { background: #cfcfcf; color: #333; }
.badge.grey { background: #777; color: #f0f0f0; }
.badge.green { background: #06c232; border-color: #5fdc7c; color: #fff; }
.badge.gold-bg { background: #e6bc00; border-color: #e6bc00; color: #3a3000; }
.badge.cyan-bg { background: #0ff; border-color: #0ff; color: #123; }
.curve { padding: 2px 4px; color: #ddd; }
.unit { position: absolute; top: 39%; writing-mode: vertical-rl; transform: rotate(180deg); }
.left .unit { left: 2px; }
.right .unit { right: 2px; }
.center { display: flex; flex-direction: column; flex: 1; min-width: 0; border: 1px solid #666; }
.legend { display: flex; height: 20px; border-bottom: 1px solid #666; line-height: 18px; color: #929292; overflow: hidden; }
.legend span { padding: 0 5px 0 3px; border-right: 1px solid #666; }
.legend em { font-style: normal; color: #bbb; }
.legend .bold { color: #fff; font-weight: 700; }
.legend .white { color: #f0f0f0; }
.legend .magenta { color: #f060f0; }
.legend .gold { color: #d9b300; }
.legend .red { color: #ee5656; }
.legend .pale { color: #c4c4c4; }
.legend .pink { color: #fa7088; }
.legend .mid { color: #a0a0a0; }
.legend .cyan { color: #00f4f4; }
.plot { position: relative; flex: 1; min-height: 0; overflow: hidden; background: #fff; }
.canvas { display: block; width: 100%; height: 100%; }
.ratios { position: absolute; left: 3px; top: 2px; display: flex; gap: 2px; }
.ratios b { padding: 0 1px; background: #000; line-height: 19px; }
.year { position: absolute; bottom: 20px; margin-left: -14px; writing-mode: vertical-rl; transform: rotate(180deg); color: #777; }
.event { position: absolute; bottom: 2px; display: flex; flex-direction: column; align-items: center; transform: translateX(-50%); color: #06c232; font: 10px/10px "Liberation Mono", monospace; }
.event svg { display: block; }
.callout { position: absolute; padding: 0 5px; border: 1px solid #999; border-radius: 4px; background: #ddd; color: #444; }
.callout svg { position: absolute; }
.hi { top: -3px; }
.hi svg { left: 0; top: 14px; }
.lo { bottom: -4px; }
.lo svg { left: 4px; top: -9px; }
.help { position: absolute; bottom: 2px; width: 22px; height: 22px; margin-left: -11px; border-radius: 50%; background: #2787ee; color: #fff; font-size: 14px; font-weight: 700; line-height: 22px; }

.timeaxis { display: flex; height: 20px; padding: 0 62px 0 61px; color: #8b8b8b; }
.times { position: relative; flex: 1; }
.month { position: absolute; top: 1px; transform: translateX(-50%); }
.start { position: absolute; left: 4px; top: 0; padding: 0 2px; border: 1px solid #aaa; border-radius: 3px; background: #777; color: #f0f0f0; }
.bottom { display: flex; align-items: flex-start; height: 17px; border-bottom: 1px solid #0a0a0a; }
.scroll { display: flex; flex: 1; height: 13px; background: #191919; }
.arr { display: flex; align-items: center; justify-content: center; width: 14px; color: #777; }
.push { margin-left: auto; }
.collapse { display: flex; align-items: center; justify-content: center; width: 31px; height: 17px; margin-left: 61px; background: #4a4a4a; border: 1px solid #666; border-bottom: 0; color: #e0e0e0; }
.bt { display: flex; align-items: center; justify-content: center; width: 20px; height: 14px; color: #ddd; }
.bt.off { color: #2c2c2c; }
.set { height: 17px; padding: 0 11px 4px 10px; color: #d0d0d0; }

.side { display: flex; flex-direction: column; width: 20px; padding-top: 2px; background: #4b4b4b; }
.side button { display: flex; justify-content: center; padding: 9px 1px 9px 0; border-left: 1px solid #666; border-bottom: 1px solid #666; color: #c4c4c4; }
.side button.sel { background: #6a6a6a; }
.side span { writing-mode: vertical-rl; transform: rotate(180deg); }
</style>
